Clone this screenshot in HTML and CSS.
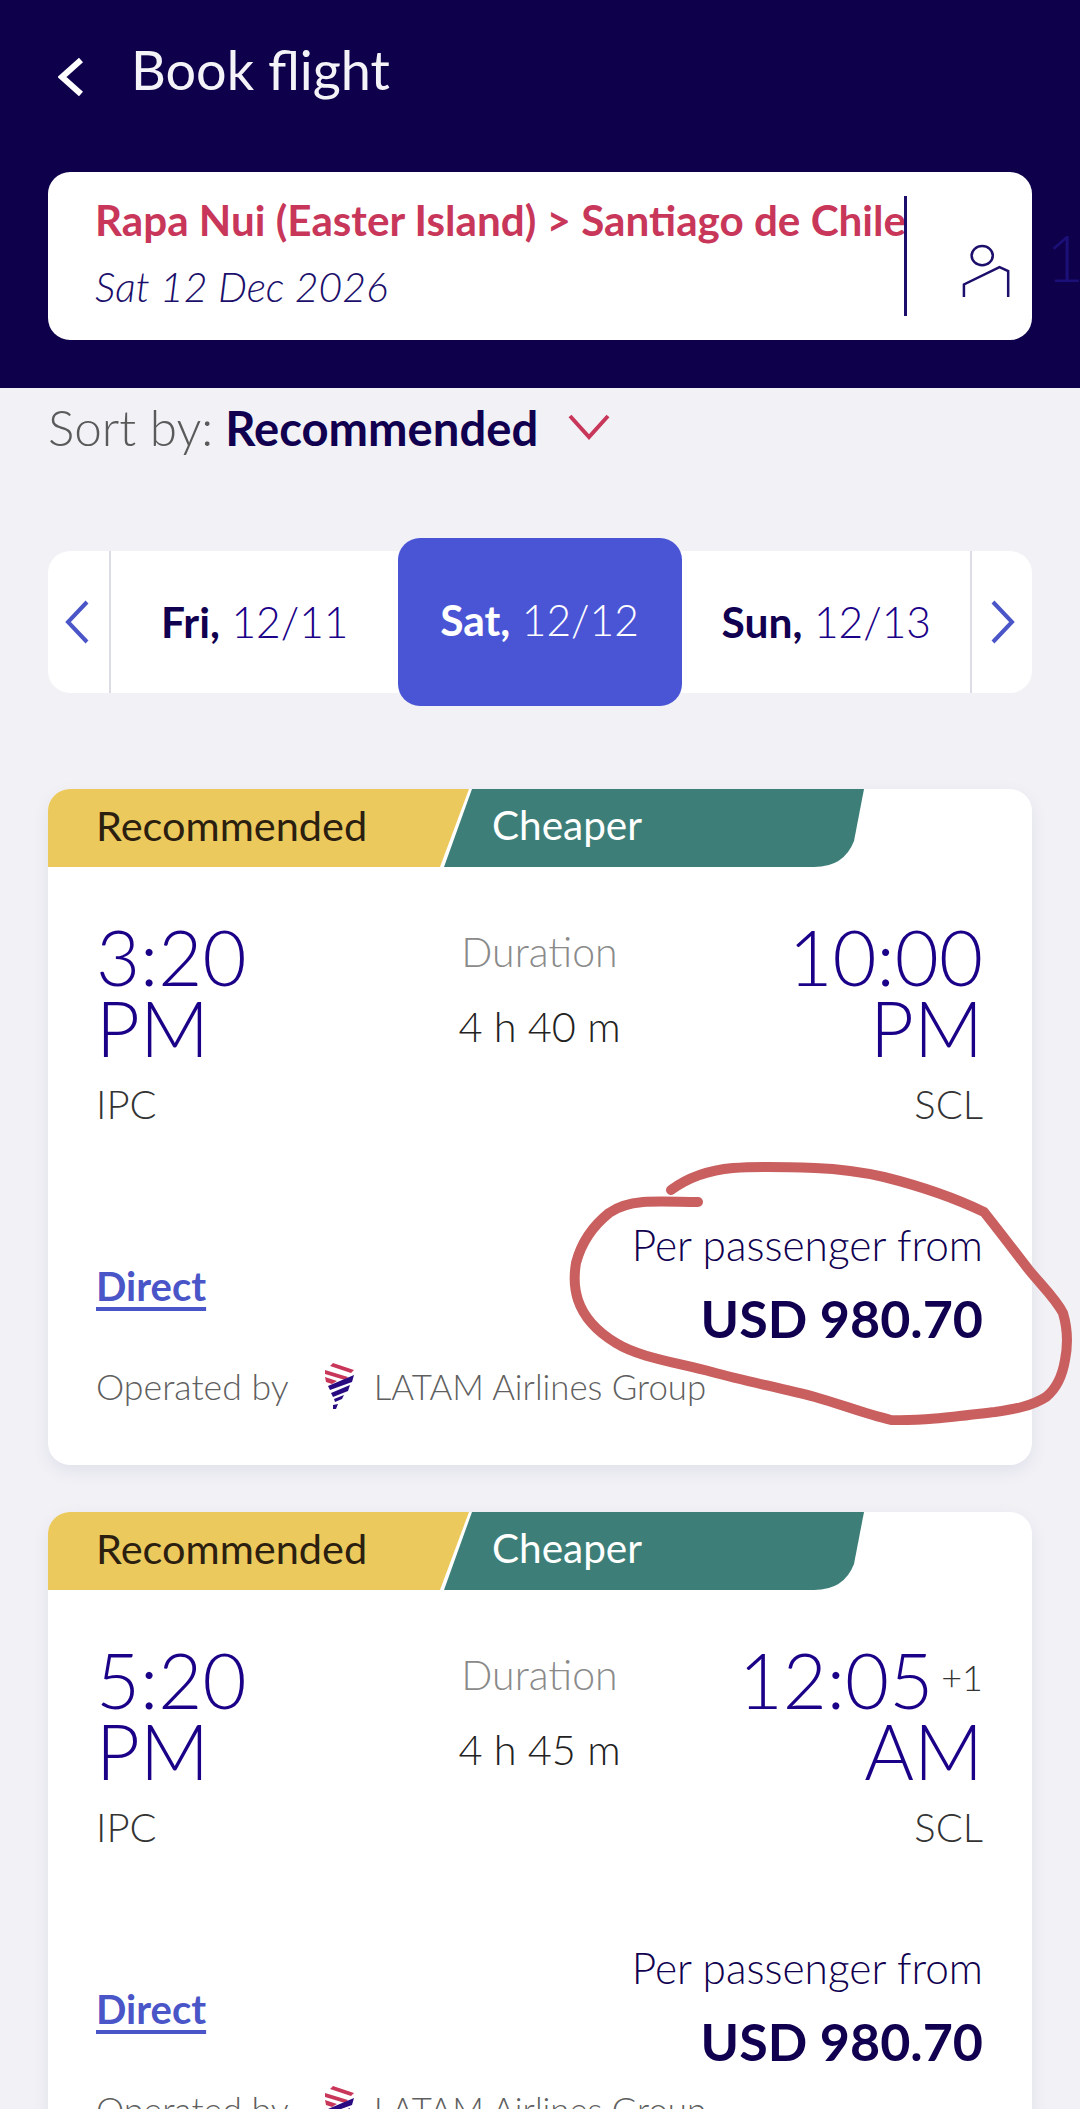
FILE: index.html
```html
<!DOCTYPE html>
<html lang="en">
<head>
	<meta charset="UTF-8">
	<title>Book flight</title>
	<link rel="stylesheet" href="styles.css">
</head>
<body>
	<div class="page">
		<header class="top">
			<div class="top-bar">
				<svg class="back" width="26" height="40" viewBox="0 0 26 40"><path d="M23 3 L4 20 L23 37" fill="none" stroke="#fff" stroke-width="6"/></svg>
				<h1 class="top-title">Book flight</h1>
			</div>
			<div class="search-row">
				<div class="search">
					<div class="search-text">
						<div class="route">Rapa Nui (Easter Island) &gt; Santiago de Chile</div>
						<div class="date">Sat 12 Dec 2026</div>
					</div>
					<div class="search-line"></div>
					<svg class="person" width="50" height="58" viewBox="0 0 50 58"><g fill="none" stroke="#1b0f6b" stroke-width="2.6"><ellipse cx="21" cy="13" rx="11" ry="10"/><path d="M2 56 V43 L39 25 L48 29 V56"/></g></svg>
				</div>
				<span class="pax">1</span>
			</div>
		</header>

		<div class="sort">
			<span class="sort-label">Sort by:</span>
			<span class="sort-value">Recommended</span>
			<svg class="sort-arrow" width="42" height="28" viewBox="0 0 42 28"><path d="M2 3 L21 24 L40 3" fill="none" stroke="#c8375a" stroke-width="4"/></svg>
		</div>

		<div class="days">
			<div class="day-arrow day-arrow-left">
				<svg width="26" height="44" viewBox="0 0 26 44"><path d="M23 2 L4 22 L23 42" fill="none" stroke="#4a55c8" stroke-width="4"/></svg>
			</div>
			<div class="day"><b>Fri,</b> 12/11</div>
			<div class="day day-on"><b>Sat,</b> 12/12</div>
			<div class="day"><b>Sun,</b> 12/13</div>
			<div class="day-arrow day-arrow-right">
				<svg width="26" height="44" viewBox="0 0 26 44"><path d="M3 2 L22 22 L3 42" fill="none" stroke="#4a55c8" stroke-width="4"/></svg>
			</div>
		</div>

		<section class="card">
			<div class="tags">
				<span class="tag tag-rec">Recommended</span>
				<span class="tag tag-cheap">Cheaper</span>
			</div>
			<div class="times">
				<div class="time-col">
					<div class="time">3:20<br>PM</div>
					<div class="code">IPC</div>
				</div>
				<div class="dur">
					<div class="dur-label">Duration</div>
					<div class="dur-value">4 h 40 m</div>
				</div>
				<div class="time-col time-end">
					<div class="time">10:00<br>PM</div>
					<div class="code">SCL</div>
				</div>
			</div>
			<div class="bottom">
				<a class="direct">Direct</a>
				<div class="price">
					<div class="price-label">Per passenger from</div>
					<div class="price-value">USD 980.70</div>
				</div>
			</div>
			<div class="operated">
				<span>Operated by</span>
				<svg class="logo" width="32" height="48" viewBox="0 0 32 48"><path d="M10 1 L31 8 L28 11 L7 4 Z M2 8 L25 15 L22 18 L2 12 Z M2 15 L14 19 L9 22 L3 20 Z" fill="#c8375a"/><path d="M31 13 L29 20 L7 28 L5 24 Z M27 23 L25 29 L10 35 L8 31 Z M21 33 L19 37 L12 40 L11 37 Z M15 42 L13 47 L10 47 L10 43 Z" fill="#2a0a80"/></svg>
				<span class="operator">LATAM Airlines Group</span>
			</div>
		</section>

		<section class="card">
			<div class="tags">
				<span class="tag tag-rec">Recommended</span>
				<span class="tag tag-cheap">Cheaper</span>
			</div>
			<div class="times">
				<div class="time-col">
					<div class="time">5:20<br>PM</div>
					<div class="code">IPC</div>
				</div>
				<div class="dur">
					<div class="dur-label">Duration</div>
					<div class="dur-value">4 h 45 m</div>
				</div>
				<div class="time-col time-end">
					<div class="time">12:05<sup class="plus">+1</sup><br>AM</div>
					<div class="code">SCL</div>
				</div>
			</div>
			<div class="bottom">
				<a class="direct">Direct</a>
				<div class="price">
					<div class="price-label">Per passenger from</div>
					<div class="price-value">USD 980.70</div>
				</div>
			</div>
			<div class="operated">
				<span>Operated by</span>
				<svg class="logo" width="32" height="48" viewBox="0 0 32 48"><path d="M10 1 L31 8 L28 11 L7 4 Z M2 8 L25 15 L22 18 L2 12 Z M2 15 L14 19 L9 22 L3 20 Z" fill="#c8375a"/><path d="M31 13 L29 20 L7 28 L5 24 Z M27 23 L25 29 L10 35 L8 31 Z M21 33 L19 37 L12 40 L11 37 Z M15 42 L13 47 L10 47 L10 43 Z" fill="#2a0a80"/></svg>
				<span class="operator">LATAM Airlines Group</span>
			</div>
		</section>

		<!-- hand drawn circle on top of the first price -->
		<svg class="scribble" width="1080" height="1500" viewBox="0 0 1080 1500">
			<path d="M671 1190 C690 1176 710 1170 733 1168 C760 1166 790 1167 815 1168 C840 1169 862 1172 884 1177 C920 1186 955 1198 984 1212 C1000 1232 1015 1252 1029 1270 C1042 1286 1055 1298 1063 1313 C1068 1330 1068 1345 1065 1360 C1062 1378 1056 1389 1046 1397 C1032 1406 1015 1409 995 1412 C960 1416 925 1421 891 1420 C865 1414 840 1404 815 1397 C780 1388 745 1381 712 1372 C680 1363 640 1358 616 1343 C596 1331 584 1318 578 1300 C574 1288 574 1275 576 1263 C582 1240 594 1225 609 1213 C620 1205 632 1203 643 1202 C660 1201 680 1202 698 1202" fill="none" stroke="#c95f5f" stroke-width="10" stroke-linecap="round" stroke-linejoin="round"/>
		</svg>
	</div>
</body>
</html>
```

FILE: styles.css
```css
*{
	margin: 0;
	padding: 0;
	box-sizing: border-box;
}
html,body{
	height: 2109px;
	overflow: hidden;
}
body{
	background: #f1f1f6;
	font-family: "Lato", "Noto Sans", sans-serif;
	color: #10004f;
}
.page{
	position: relative;
	height: 2109px;
	overflow: hidden;
}

/* header */
.top{
	height: 388px;
	background: #0f004b;
	overflow: hidden;
}
.top-bar{
	height: 172px;
	padding: 54px 0 0 58px;
	display: flex;
	align-items: flex-start;
}
.back{
	margin-top: 3px;
}
.top-title{
	margin-left: 47px;
	font-size: 54px;
	line-height: 32px;
	font-weight: 400;
	color: #f4f4f8;
}
.search-row{
	display: flex;
	align-items: center;
	padding-left: 48px;
}
.search{
	flex: none;
	width: 984px;
	height: 168px;
	background: #fff;
	border-radius: 22px;
	display: flex;
	padding: 24px 22px 0 47px;
}
.search-text{
	width: 809px;
}
.route{
	font-size: 42.2px;
	line-height: 48px;
	font-weight: 700;
	color: #c8375a;
	white-space: nowrap;
}
.date{
	margin-top: 19px;
	font-size: 41px;
	line-height: 48px;
	font-style: italic;
	font-weight: 300;
	color: #1b0f6b;
}
.search-line{
	width: 3px;
	height: 120px;
	background: #1b0f6b;
}
.person{
	margin: 46px 0 0 55px;
}
.pax{
	margin-left: 14px;
	font-size: 66px;
	font-weight: 300;
	color: #1b0f78;
}

/* sort */
.sort{
	height: 60px;
	margin-top: 9px;
	padding-left: 48px;
	display: flex;
	align-items: center;
}
.sort-label{
	font-size: 49.5px;
	font-weight: 300;
	color: #5a5a5a;
}
.sort-value{
	margin-left: 12px;
	font-size: 47.2px;
	font-weight: 700;
	color: #10004f;
}
.sort-arrow{
	margin-left: 30px;
}

/* date strip */
.days{
	width: 984px;
	height: 142px;
	margin: 94px 0 96px 48px;
	background: #fff;
	border-radius: 22px;
	display: flex;
	align-items: center;
}
.day-arrow{
	flex: none;
	width: 62px;
	height: 100%;
	display: flex;
	align-items: center;
	padding-left: 16px;
}
.day-arrow-left{
	width: 63px;
	border-right: 2px solid #dcdce4;
}
.day-arrow-right{
	border-left: 2px solid #dcdce4;
	padding-left: 18px;
}
.day{
	flex: 1;
	font-size: 42.5px;
	line-height: 40px;
	font-weight: 300;
	text-align: center;
	color: #1b0088;
}
.day b{
	font-weight: 700;
	color: #10004f;
}
.day-on{
	flex: none;
	width: 284px;
	height: 168px;
	margin: 0 1px 0 -1px;
	padding-top: 62px;
	background: #4a55d6;
	border-radius: 22px;
	color: #fff;
}
.day-on b{
	color: #fff;
}

/* flight card */
.card{
	width: 984px;
	height: 676px;
	margin: 0 0 47px 48px;
	background: #fff;
	border-radius: 22px;
	overflow: hidden;
	box-shadow: 0 6px 18px rgba(20,20,80,.07);
}
.tags{
	height: 78px;
	display: flex;
}
.tag{
	height: 78px;
	line-height: 72px;
	font-weight: 400;
}
.tag-rec{
	width: 421px;
	padding-left: 48px;
	font-size: 41.5px;
	background: #ecc95c;
	color: #2b2010;
	clip-path: polygon(0 0, 100% 0, calc(100% - 29px) 100%, 0 100%);
}
.tag-cheap{
	width: 420px;
	margin-left: -25px;
	padding-left: 48px;
	font-size: 40.5px;
	background: #3d7f78;
	color: #fff;
	clip-path: path("M28 0 L420 0 L410 52 Q400 78 370 78 L0 78 Z");
}
.times{
	display: grid;
	grid-template-columns: 1fr auto 1fr;
	padding: 54px 49px 0 48px;
}
.time{
	font-size: 76px;
	line-height: 71px;
	font-weight: 300;
	color: #1b0088;
}
.code{
	margin-top: 17px;
	font-size: 40px;
	line-height: 48px;
	font-weight: 300;
	color: #333;
}
.time-end{
	text-align: right;
}
.plus{
	margin-left: 8px;
	font-size: 36px;
	line-height: 0;
	font-weight: 300;
	color: #333;
	vertical-align: 18px;
}
.dur{
	text-align: center;
	padding-top: 7px;
}
.dur-label{
	font-size: 41px;
	line-height: 48px;
	font-weight: 300;
	color: #8a8a8a;
}
.dur-value{
	margin-top: 26px;
	font-size: 41.5px;
	line-height: 48px;
	font-weight: 300;
	color: #222;
}
.bottom{
	display: flex;
	justify-content: space-between;
	align-items: flex-end;
	margin-top: 93px;
	padding: 0 49px 0 48px;
}
.direct{
	margin-bottom: 39px;
	font-size: 40px;
	line-height: 46px;
	font-weight: 700;
	color: #4a55c8;
	text-decoration: underline;
	text-underline-offset: 6px;
}
.price{
	text-align: right;
}
.price-label{
	font-size: 42.4px;
	line-height: 48px;
	font-weight: 300;
	color: #10004f;
}
.price-value{
	margin-top: 19px;
	font-size: 52px;
	line-height: 60px;
	font-weight: 700;
	color: #10004f;
}
.operated{
	display: flex;
	align-items: center;
	margin-top: 14px;
	padding-left: 48px;
	font-size: 35.7px;
	font-weight: 300;
	color: #5f5f5f;
}
.operator{
	font-size: 34.8px;
}
.logo{
	margin: 0 19px 0 34px;
}

/* the pen circle */
.scribble{
	position: absolute;
	left: 0;
	top: 0;
}
```
